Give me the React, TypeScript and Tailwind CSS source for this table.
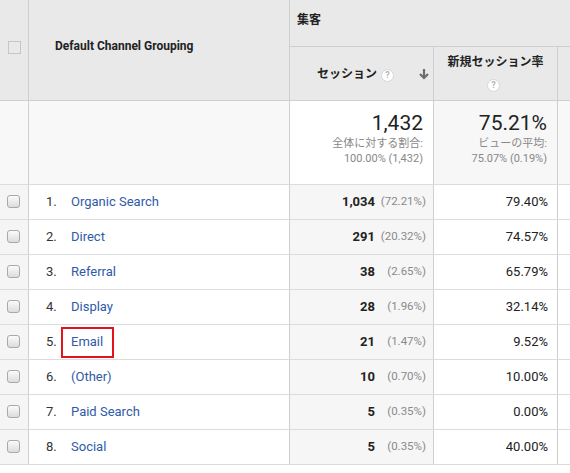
import React from "react";

const rows = [
  { n: 1, name: "Organic Search", s: "1,034", p: "(72.21%)", r: "79.40%" },
  { n: 2, name: "Direct", s: "291", p: "(20.32%)", r: "74.57%" },
  { n: 3, name: "Referral", s: "38", p: "(2.65%)", r: "65.79%" },
  { n: 4, name: "Display", s: "28", p: "(1.96%)", r: "32.14%" },
  { n: 5, name: "Email", s: "21", p: "(1.47%)", r: "9.52%", mark: true },
  { n: 6, name: "(Other)", s: "10", p: "(0.70%)", r: "10.00%" },
  { n: 7, name: "Paid Search", s: "5", p: "(0.35%)", r: "0.00%" },
  { n: 8, name: "Social", s: "5", p: "(0.35%)", r: "40.00%" },
];

function Help() {
  return (
    <span className="inline-flex items-center justify-center w-[13px] h-[13px] rounded-full bg-white border border-[#d6d6d6] text-[9px] font-bold leading-none text-[#b5b5b5]">
      ?
    </span>
  );
}

function Check() {
  return (
    <span className="block w-[13px] h-[13px] rounded-[3px] border border-[#a9a9a9] bg-gradient-to-b from-[#fbfbfb] to-[#dcdcdc]" />
  );
}

export default function App() {
  return (
    <div
      className="w-[570px] h-[473px] overflow-hidden bg-white text-[#222]"
      style={{ fontFamily: "Roboto, 'Noto Sans CJK JP', sans-serif" }}
    >
      {/* Header */}
      <div className="flex h-[101px] bg-[#e9e9e9] border-b border-[#cfcfcf]">
        <div className="w-[29px] shrink-0 border-r border-[#cfcfcf] flex items-center justify-center pl-[1px] pb-[6px]">
          <span className="block w-[13px] h-[13px] border border-[#c6c6c6]" />
        </div>
        <div className="w-[261px] shrink-0 border-r border-[#cfcfcf] flex items-center pl-[26px] pb-[8px] text-[12px] font-bold text-[#222]">
          Default Channel Grouping
        </div>
        <div className="flex-1 flex flex-col">
          <div className="h-[47px] border-b border-[#cfcfcf] flex items-center pl-[7px] pb-[7px] text-[12px] font-bold">
            集客
          </div>
          <div className="flex flex-1">
            <div className="w-[144px] shrink-0 border-r border-[#cfcfcf] flex items-center pl-[27px] pr-[3px] text-[12px] font-bold">
              <span>セッション</span>
              <span className="ml-[4px]">
                <Help />
              </span>
              <span className="ml-auto">
                <svg width="12" height="12" viewBox="0 0 12 12">
                  <path d="M6 1v8" stroke="#6b6b6b" strokeWidth="2.2" />
                  <path d="M2 6l4 4 4-4" stroke="#6b6b6b" strokeWidth="2.2" fill="none" />
                </svg>
              </span>
            </div>
            <div className="w-[124px] shrink-0 border-r border-[#cfcfcf] flex flex-col items-center pt-[7px] text-[12px] font-bold">
              <span className="leading-[16px]">新規セッション率</span>
              <span className="mt-[5px] -ml-[4px]">
                <Help />
              </span>
            </div>
            <div className="flex-1" />
          </div>
        </div>
      </div>

      {/* Summary */}
      <div className="flex h-[84px] border-b border-[#dcdcdc]">
        <div className="w-[29px] shrink-0 border-r border-[#cfcfcf] bg-[#f8f8f8]" />
        <div className="w-[261px] shrink-0 border-r border-[#cfcfcf] bg-[#f8f8f8]" />
        <div className="w-[144px] shrink-0 border-r border-[#cfcfcf] bg-white flex flex-col items-end pr-[10px] pt-[9px]">
          <span className="text-[21px] leading-[26px] text-[#222]">1,432</span>
          <span className="text-[11px] leading-[15px] text-[#888]">全体に対する割合:</span>
          <span className="text-[11px] leading-[15px] text-[#888]">100.00% (1,432)</span>
        </div>
        <div className="w-[124px] shrink-0 border-r border-[#cfcfcf] bg-[#f7f7f7] flex flex-col items-end pr-[10px] pt-[9px]">
          <span className="text-[21px] leading-[26px] text-[#222]">75.21%</span>
          <span className="text-[11px] leading-[15px] text-[#888]">ビューの平均:</span>
          <span className="text-[11px] leading-[15px] text-[#888]">75.07% (0.19%)</span>
        </div>
        <div className="flex-1 bg-[#f8f8f8]" />
      </div>

      {/* Rows */}
      {rows.map((r) => (
        <div key={r.n} className="flex h-[35px] border-b border-[#dcdcdc]">
          <div className="w-[29px] shrink-0 border-r border-[#cfcfcf] bg-[#f5f5f5] flex items-center pl-[7px] pb-[2px]">
            <Check />
          </div>
          <div className="w-[261px] shrink-0 border-r border-[#cfcfcf] flex items-center pl-[17px] text-[13px]">
            <span className="w-[25px] text-[#333]">{r.n}.</span>
            <span className="relative text-[#2f5ba8]">
              {r.name}
              {r.mark && (
                <span className="absolute left-[-10px] right-[-11px] top-[-5px] bottom-[-6px] border-2 border-[#e3121e]" />
              )}
            </span>
          </div>
          <div className="w-[144px] shrink-0 border-r border-[#cfcfcf] bg-[#f6f6f6] flex items-center justify-end pr-[7px]">
            <span className="text-[13px] font-bold text-[#222]">{r.s}</span>
            <span className="w-[51px] text-right text-[11.5px] text-[#8a8a8a]">{r.p}</span>
          </div>
          <div className="w-[124px] shrink-0 border-r border-[#cfcfcf] flex items-center justify-end pr-[9px] text-[13px] text-[#222]">
            {r.r}
          </div>
          <div className="flex-1" />
        </div>
      ))}
    </div>
  );
}
